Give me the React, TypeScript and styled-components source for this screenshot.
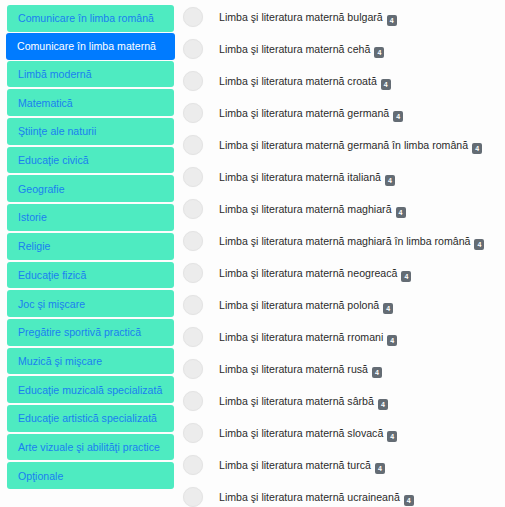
import React from "react";
import styled, { createGlobalStyle } from "styled-components";

const Global = createGlobalStyle`
  html, body { margin: 0; padding: 0; background: #fdfdfd; }
  body { font-family: "Liberation Sans", Arial, sans-serif; }
`;

const Page = styled.div`
  display: flex;
  align-items: flex-start;
  padding-left: 7px;
`;

const Sidebar = styled.div`
  width: 167px;
  display: flex;
  flex-direction: column;
  gap: 2px;
  padding-top: 5px;
  flex-shrink: 0;
`;

const NavItem = styled.div<{ $active?: boolean }>`
  box-sizing: border-box;
  height: ${(p) => (p.$active ? "27px" : "26.7px")};
  margin: ${(p) => (p.$active ? "-1px -1px" : "0")};
  display: flex;
  align-items: center;
  padding-left: 11px;
  border-radius: 3px;
  font-size: 10.6px;
  background: ${(p) => (p.$active ? "#007bff" : "#4eebc1")};
  color: ${(p) => (p.$active ? "#ffffff" : "#1a7ff0")};
  white-space: nowrap;
`;

const List = styled.div`
  margin-left: 9px;
  display: flex;
  flex-direction: column;
  padding-top: 1px;
`;

const Row = styled.div`
  height: 32px;
  display: flex;
  align-items: center;
`;

const Dot = styled.span`
  box-sizing: border-box;
  width: 20px;
  height: 20px;
  border-radius: 50%;
  background: #ececec;
  border: 1px solid #e4e4e4;
  box-shadow: 0 0 1px rgba(0, 0, 0, 0.08);
  flex-shrink: 0;
`;

const Label = styled.span`
  margin-left: 16px;
  margin-top: 2px;
  font-size: 10.6px;
  color: #2b2b2b;
  white-space: nowrap;
`;

const Badge = styled.span`
  display: inline-block;
  margin-left: 4px;
  min-width: 10px;
  height: 11px;
  line-height: 11px;
  padding: 0 1px;
  box-sizing: border-box;
  text-align: center;
  border-radius: 2px;
  background: #646c74;
  color: #fff;
  font-size: 7px;
  font-weight: bold;
  vertical-align: -2px;
`;

const subjects = [
  "Comunicare în limba română",
  "Comunicare în limba maternă",
  "Limbă modernă",
  "Matematică",
  "Ştiinţe ale naturii",
  "Educaţie civică",
  "Geografie",
  "Istorie",
  "Religie",
  "Educaţie fizică",
  "Joc şi mişcare",
  "Pregătire sportivă practică",
  "Muzică şi mişcare",
  "Educaţie muzicală specializată",
  "Educaţie artistică specializată",
  "Arte vizuale şi abilităţi practice",
  "Opţionale",
];

const languages = [
  "bulgară",
  "cehă",
  "croată",
  "germană",
  "germană în limba română",
  "italiană",
  "maghiară",
  "maghiară în limba română",
  "neogreacă",
  "polonă",
  "rromani",
  "rusă",
  "sârbă",
  "slovacă",
  "turcă",
  "ucraineană",
];

export default function App() {
  return (
    <>
      <Global />
      <Page>
        <Sidebar>
          {subjects.map((s, i) => (
            <NavItem key={s} $active={i === 1}>
              {s}
            </NavItem>
          ))}
        </Sidebar>
        <List>
          {languages.map((l) => (
            <Row key={l}>
              <Dot />
              <Label>
                Limba şi literatura maternă {l}
                <Badge>4</Badge>
              </Label>
            </Row>
          ))}
        </List>
      </Page>
    </>
  );
}
